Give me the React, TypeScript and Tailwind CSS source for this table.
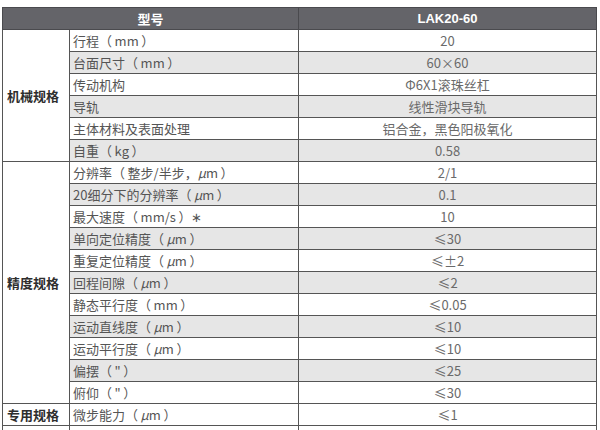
import React from 'react';

type Row = { name: string; value: string; shade: boolean };

const groups: { title: string; rows: Row[] }[] = [
    {
        title: '机械规格',
        rows: [
            { name: '行程（mm）', value: '20', shade: false },
            { name: '台面尺寸（mm）', value: '60×60', shade: true },
            { name: '传动机构', value: 'Φ6X1滚珠丝杠', shade: false },
            { name: '导轨', value: '线性滑块导轨', shade: true },
            { name: '主体材料及表面处理', value: '铝合金，黑色阳极氧化', shade: false },
            { name: '自重（kg）', value: '0.58', shade: true },
        ],
    },
    {
        title: '精度规格',
        rows: [
            { name: '分辨率（整步/半步，μm）', value: '2/1', shade: false },
            { name: '20细分下的分辨率（μm）', value: '0.1', shade: true },
            { name: '最大速度（mm/s）∗', value: '10', shade: false },
            { name: '单向定位精度（μm）', value: '≤30', shade: true },
            { name: '重复定位精度（μm）', value: '≤±2', shade: false },
            { name: '回程间隙（μm）', value: '≤2', shade: true },
            { name: '静态平行度（mm）', value: '≤0.05', shade: false },
            { name: '运动直线度（μm）', value: '≤10', shade: true },
            { name: '运动平行度（μm）', value: '≤10', shade: false },
            { name: '偏摆（"）', value: '≤25', shade: true },
            { name: '俯仰（"）', value: '≤30', shade: false },
        ],
    },
    {
        title: '专用规格',
        rows: [{ name: '微步能力（μm）', value: '≤1', shade: false }],
    },
];

// pad the full-width brackets a little and slant the micro sign, as in the datasheet
const renderName = (name: string) => {
    const padded = name.replace('（', '（\u2009').replace('）', '\u2009）');
    const parts = padded.split('μ');
    return parts.map((p, i) => (
        <React.Fragment key={i}>
            {i > 0 && <span className="italic">μ</span>}
            {p}
        </React.Fragment>
    ));
};

const App: React.FC = () => {
    return (
        <div
            className="w-[600px] h-[430px] overflow-hidden bg-white pt-[7px] pl-[2px]"
            style={{ fontFamily: '"Noto Sans CJK SC", "Noto Sans", sans-serif' }}
        >
            <table className="table-fixed border-collapse w-[594px] text-[13px] leading-none">
                <colgroup>
                    <col className="w-[67px]" />
                    <col className="w-[229px]" />
                    <col className="w-[298px]" />
                </colgroup>
                <thead>
                    <tr className="h-[22px] bg-[#646469] text-white font-bold">
                        <th colSpan={2} className="border border-[#4a4a4e] text-center font-bold">型号</th>
                        <th className="border border-[#4a4a4e] text-center font-bold" style={{ fontFamily: '"Liberation Sans", sans-serif' }}>
                            LAK20-60
                        </th>
                    </tr>
                </thead>
                <tbody>
                    {groups.map((g) =>
                        g.rows.map((r, i) => (
                            <tr key={g.title + i} className={`h-[22px] ${r.shade ? 'bg-[#e6e6e6]' : 'bg-white'}`}>
                                {i === 0 && (
                                    <td
                                        rowSpan={g.rows.length}
                                        className="bg-white border border-[#555] pl-[4px] font-bold text-[#2e2e2e] whitespace-nowrap"
                                    >
                                        {g.title}
                                    </td>
                                )}
                                <td className="border border-[#555] pl-[3px] text-[#555] whitespace-nowrap">{renderName(r.name)}</td>
                                <td className="border border-[#555] text-center text-[#6a6a6a] whitespace-nowrap">{r.value}</td>
                            </tr>
                        ))
                    )}
                    <tr className="h-[22px] bg-white">
                        <td className="border border-[#555]"></td>
                        <td className="border border-[#555]"></td>
                        <td className="border border-[#555]"></td>
                    </tr>
                </tbody>
            </table>
        </div>
    );
};

export default App;
